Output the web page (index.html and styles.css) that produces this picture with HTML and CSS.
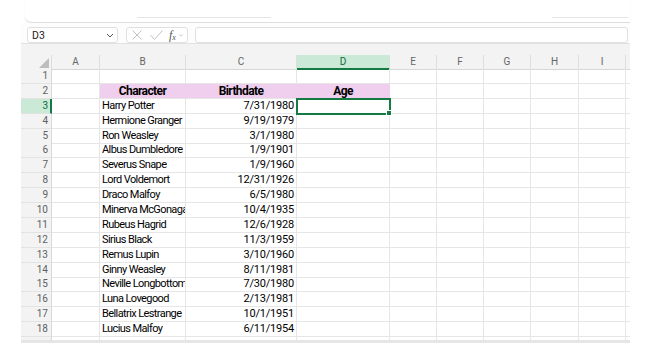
FILE: index.html
```html
<!DOCTYPE html>
<html lang="en">
<head>
    <meta charset="UTF-8">
    <meta name="viewport" content="width=device-width, initial-scale=1.0">
    <title>Character Ages - Workbook</title>
    <link rel="stylesheet" href="styles.css">
</head>
<body>
    <div class="app">
        <div class="ribbon">
            <span class="ribbon-line first"></span>
            <span class="ribbon-line last"></span>
        </div>

        <div class="formula-bar">
            <div class="name-box">
                <span>D3</span>
                <svg width="8" height="5" viewBox="0 0 8 5"><path d="M1 1 L4 4 L7 1" fill="none" stroke="#555" stroke-width="1"/></svg>
            </div>
            <div class="fx-buttons">
                <svg width="10" height="10" viewBox="0 0 10 10"><path d="M0.5 0.5 L9.5 9.5 M9.5 0.5 L0.5 9.5" stroke="#c2c2c2" stroke-width="1" fill="none"/></svg>
                <svg width="13" height="10" viewBox="0 0 13 10"><path d="M0.5 5 L4.5 9.5 L12.5 0.5" stroke="#c2c2c2" stroke-width="1" fill="none"/></svg>
                <span class="fx">f<span class="fx-sub">x</span></span>
                <svg width="4" height="3" viewBox="0 0 4 3"><path d="M0.5 0.5 L2 2.2 L3.5 0.5" stroke="#bbb" stroke-width="0.8" fill="none"/></svg>
            </div>
            <div class="formula-input"></div>
        </div>

        <div class="sheet">
            <div class="sheet-top"></div>
            <div class="row head">
                <div class="corner"><svg width="10" height="10" viewBox="0 0 10 10"><path d="M10 0 L10 10 L0 10 Z" fill="#bdbdbd"/></svg></div>
                <div class="ch">A</div>
                <div class="ch">B</div>
                <div class="ch">C</div>
                <div class="ch active">D</div>
                <div class="ch">E</div>
                <div class="ch">F</div>
                <div class="ch">G</div>
                <div class="ch">H</div>
                <div class="ch">I</div>
                <div class="ch end"></div>
            </div>

            <div class="row"><div class="rh">1</div><div class="c"></div><div class="c"></div><div class="c"></div><div class="c"></div><div class="c"></div><div class="c"></div><div class="c"></div><div class="c"></div><div class="c"></div><div class="c end"></div></div>
            <div class="row"><div class="rh">2</div><div class="c"></div><div class="c title">Character</div><div class="c title">Birthdate</div><div class="c title">Age</div><div class="c"></div><div class="c"></div><div class="c"></div><div class="c"></div><div class="c"></div><div class="c end"></div></div>
            <div class="row"><div class="rh active">3</div><div class="c"></div><div class="c name">Harry Potter</div><div class="c date">7/31/1980</div><div class="c selected"></div><div class="c"></div><div class="c"></div><div class="c"></div><div class="c"></div><div class="c"></div><div class="c end"></div></div>
            <div class="row"><div class="rh">4</div><div class="c"></div><div class="c name">Hermione Granger</div><div class="c date">9/19/1979</div><div class="c"></div><div class="c"></div><div class="c"></div><div class="c"></div><div class="c"></div><div class="c"></div><div class="c end"></div></div>
            <div class="row"><div class="rh">5</div><div class="c"></div><div class="c name">Ron Weasley</div><div class="c date">3/1/1980</div><div class="c"></div><div class="c"></div><div class="c"></div><div class="c"></div><div class="c"></div><div class="c"></div><div class="c end"></div></div>
            <div class="row"><div class="rh">6</div><div class="c"></div><div class="c name">Albus Dumbledore</div><div class="c date">1/9/1901</div><div class="c"></div><div class="c"></div><div class="c"></div><div class="c"></div><div class="c"></div><div class="c"></div><div class="c end"></div></div>
            <div class="row"><div class="rh">7</div><div class="c"></div><div class="c name">Severus Snape</div><div class="c date">1/9/1960</div><div class="c"></div><div class="c"></div><div class="c"></div><div class="c"></div><div class="c"></div><div class="c"></div><div class="c end"></div></div>
            <div class="row"><div class="rh">8</div><div class="c"></div><div class="c name">Lord Voldemort</div><div class="c date">12/31/1926</div><div class="c"></div><div class="c"></div><div class="c"></div><div class="c"></div><div class="c"></div><div class="c"></div><div class="c end"></div></div>
            <div class="row"><div class="rh">9</div><div class="c"></div><div class="c name">Draco Malfoy</div><div class="c date">6/5/1980</div><div class="c"></div><div class="c"></div><div class="c"></div><div class="c"></div><div class="c"></div><div class="c"></div><div class="c end"></div></div>
            <div class="row"><div class="rh">10</div><div class="c"></div><div class="c name">Minerva McGonagall</div><div class="c date">10/4/1935</div><div class="c"></div><div class="c"></div><div class="c"></div><div class="c"></div><div class="c"></div><div class="c"></div><div class="c end"></div></div>
            <div class="row"><div class="rh">11</div><div class="c"></div><div class="c name">Rubeus Hagrid</div><div class="c date">12/6/1928</div><div class="c"></div><div class="c"></div><div class="c"></div><div class="c"></div><div class="c"></div><div class="c"></div><div class="c end"></div></div>
            <div class="row"><div class="rh">12</div><div class="c"></div><div class="c name">Sirius Black</div><div class="c date">11/3/1959</div><div class="c"></div><div class="c"></div><div class="c"></div><div class="c"></div><div class="c"></div><div class="c"></div><div class="c end"></div></div>
            <div class="row"><div class="rh">13</div><div class="c"></div><div class="c name">Remus Lupin</div><div class="c date">3/10/1960</div><div class="c"></div><div class="c"></div><div class="c"></div><div class="c"></div><div class="c"></div><div class="c"></div><div class="c end"></div></div>
            <div class="row"><div class="rh">14</div><div class="c"></div><div class="c name">Ginny Weasley</div><div class="c date">8/11/1981</div><div class="c"></div><div class="c"></div><div class="c"></div><div class="c"></div><div class="c"></div><div class="c"></div><div class="c end"></div></div>
            <div class="row"><div class="rh">15</div><div class="c"></div><div class="c name">Neville Longbottom</div><div class="c date">7/30/1980</div><div class="c"></div><div class="c"></div><div class="c"></div><div class="c"></div><div class="c"></div><div class="c"></div><div class="c end"></div></div>
            <div class="row"><div class="rh">16</div><div class="c"></div><div class="c name">Luna Lovegood</div><div class="c date">2/13/1981</div><div class="c"></div><div class="c"></div><div class="c"></div><div class="c"></div><div class="c"></div><div class="c"></div><div class="c end"></div></div>
            <div class="row"><div class="rh">17</div><div class="c"></div><div class="c name">Bellatrix Lestrange</div><div class="c date">10/1/1951</div><div class="c"></div><div class="c"></div><div class="c"></div><div class="c"></div><div class="c"></div><div class="c"></div><div class="c end"></div></div>
            <div class="row"><div class="rh">18</div><div class="c"></div><div class="c name">Lucius Malfoy</div><div class="c date">6/11/1954</div><div class="c"></div><div class="c"></div><div class="c"></div><div class="c"></div><div class="c"></div><div class="c"></div><div class="c end"></div></div>
            <div class="row partial"><div class="rh"></div><div class="c"></div><div class="c"></div><div class="c"></div><div class="c"></div><div class="c"></div><div class="c"></div><div class="c"></div><div class="c"></div><div class="c"></div><div class="c end"></div></div>
        </div>
    </div>
</body>
</html>
```

FILE: styles.css
```css
* {
    margin: 0;
    padding: 0;
    box-sizing: border-box;
}

body {
    background: #fff;
    font-family: 'Roboto', sans-serif;
    color: #000;
}

.app {
    margin-left: 21px;
    width: 609px;
}

/* top ribbon edge */
.ribbon {
    height: 23px;
    margin-left: 4px;
    display: flex;
    align-items: flex-end;
    padding-bottom: 4px;
    border-bottom: 1px solid #dedede;
    border-bottom-left-radius: 7px;
    box-shadow: 0 2px 2px rgba(0, 0, 0, 0.06);
}

.ribbon-line {
    height: 1px;
    background: #e4e4e4;
}

.ribbon-line.first {
    margin-left: 112px;
    width: 134px;
}

.ribbon-line.last {
    margin-left: auto;
    width: 76px;
    margin-right: 2px;
}

/* formula bar */
.formula-bar {
    height: 20px;
    padding: 4px 2px 0 6px;
    display: flex;
    background: #fdfdfd;
}

.name-box {
    width: 91px;
    height: 16px;
    border: 1px solid #e0e0e0;
    border-radius: 3px;
    background: #fff;
    display: flex;
    align-items: center;
    justify-content: space-between;
    padding: 0 3px 0 4px;
    font-size: 10.5px;
    color: #222;
}

.fx-buttons {
    margin-left: 8px;
    width: 62px;
    height: 16px;
    border: 1px solid #e0e0e0;
    border-radius: 3px;
    background: #fff;
    display: flex;
    align-items: center;
    padding-left: 5px;
}

.fx-buttons svg:nth-child(2) {
    margin-left: 8px;
}

.fx {
    margin-left: 6px;
    font-family: 'Liberation Serif', serif;
    font-style: italic;
    font-size: 12px;
    color: #555;
    line-height: 12px;
    display: flex;
    align-items: flex-end;
}

.fx-sub {
    font-size: 8px;
    line-height: 8px;
    margin-bottom: -1px;
}

.fx-buttons svg:last-child {
    margin-left: 3px;
}

.formula-input {
    margin-left: 7px;
    flex: 1;
    height: 16px;
    border: 1px solid #e0e0e0;
    border-radius: 3px;
    background: #fff;
}

/* grid */
.sheet {
    border-bottom: 2px solid #e6e6e6;
}

.sheet-top {
    height: 12px;
    background: #f3f3f3;
    border-top: 1px solid #e2e2e2;
}

.row {
    display: grid;
    grid-template-columns: 31px 48px 86px 111px 93px 47px 47px 47px 48px 47px 4px;
    height: 14.9px;
}

.row.head {
    height: 14px;
}

.row.partial {
    height: 4px;
}

.corner,
.ch {
    background: #f3f3f3;
    border-right: 1px solid #dddddd;
    border-bottom: 1px solid #d6d6d6;
}

.corner {
    display: flex;
    justify-content: flex-end;
    align-items: flex-end;
    padding: 0 2px 1px 0;
}

.ch {
    font-size: 10px;
    color: #666;
    text-align: center;
    line-height: 13px;
}

.ch.active {
    background: #cae9d7;
    color: #0f6b3a;
    border-bottom: 2px solid #137a43;
}

.ch.end,
.c.end {
    border-right: none;
}

.rh {
    background: #f3f3f3;
    border-right: 1px solid #d9d9d9;
    border-bottom: 1px solid #e3e3e3;
    font-size: 10px;
    color: #616161;
    text-align: right;
    padding-right: 3px;
    line-height: 14px;
}

.rh.active {
    background: #cae9d7;
    color: #0f6b3a;
    border-right: 2px solid #137a43;
    padding-right: 2px;
}

.c {
    border-right: 1px solid #e6e6e6;
    border-bottom: 1px solid #e6e6e6;
    font-size: 11px;
    line-height: 14px;
    letter-spacing: -0.6px;
    white-space: nowrap;
    overflow: hidden;
}

.c.name {
    padding-left: 2px;
}

.c.date {
    text-align: right;
    padding-right: 2px;
    letter-spacing: -0.2px;
}

.c.title {
    background: #f0cfee;
    border-right-color: #f0cfee;
    font-size: 12px;
    font-weight: bold;
    text-align: center;
    letter-spacing: -0.6px;
}

.c.selected {
    position: relative;
    overflow: visible;
    outline: 2px solid #137a43;
    outline-offset: -1px;
}

.c.selected::after {
    content: "";
    position: absolute;
    right: -3px;
    bottom: -3px;
    width: 4px;
    height: 4px;
    background: #137a43;
    border: 1px solid #fff;
}
```
